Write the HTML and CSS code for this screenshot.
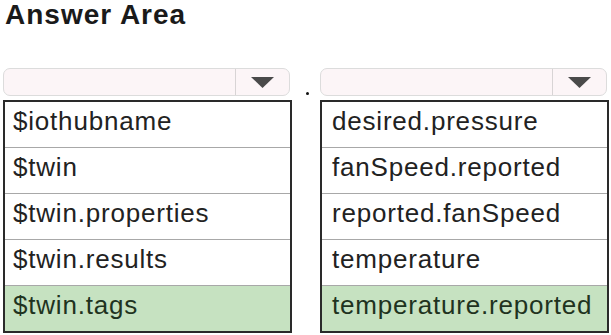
FILE: index.html
```html
<!DOCTYPE html>
<html>
<head>
<meta charset="utf-8">
<link rel="stylesheet" href="styles.css">
</head>
<body>
<div class="page">
  <h1 class="title">Answer Area</h1>
  <div class="row">
    <div class="col">
      <div class="dropdown">
        <div class="dd-field"></div>
        <div class="dd-btn">
          <svg width="23" height="11" viewBox="0 0 23 11"><polygon points="0,0 23,0 11.5,11" fill="#4a4a4a"/></svg>
        </div>
      </div>
      <ul class="list list-left">
        <li>$iothubname</li>
        <li>$twin</li>
        <li>$twin.properties</li>
        <li>$twin.results</li>
        <li class="sel">$twin.tags</li>
      </ul>
    </div>
    <div class="sep"><span class="dot"></span></div>
    <div class="col">
      <div class="dropdown">
        <div class="dd-field"></div>
        <div class="dd-btn">
          <svg width="23" height="11" viewBox="0 0 23 11"><polygon points="0,0 23,0 11.5,11" fill="#4a4a4a"/></svg>
        </div>
      </div>
      <ul class="list list-right">
        <li>desired.pressure</li>
        <li>fanSpeed.reported</li>
        <li>reported.fanSpeed</li>
        <li>temperature</li>
        <li class="sel">temperature.reported</li>
      </ul>
    </div>
  </div>
</div>
</body>
</html>
```
FILE: styles.css
```css
html, body {
  margin: 0;
  padding: 0;
  background: #ffffff;
}
body {
  font-family: "Liberation Sans", Arial, sans-serif;
  color: #222;
}
.page {
  width: 611px;
  height: 335px;
  overflow: hidden;
}
.title {
  margin: 0 0 38px 5px;
  font-size: 28px;
  line-height: 30px;
  font-weight: bold;
  letter-spacing: 1px;
  color: #1a1a1a;
}
.row {
  display: flex;
  padding-left: 3px;
}
.col {
  width: 289px;
  display: flex;
  flex-direction: column;
}
.sep {
  width: 28px;
  position: relative;
}
.dot {
  position: absolute;
  left: 14px;
  top: 24px;
  width: 3px;
  height: 3px;
  background: #111;
  border-radius: 50%;
}
.dropdown {
  width: calc(100% - 2px);
  height: 28px;
  box-sizing: border-box;
  border: 1px solid #dcdcdc;
  border-radius: 7px;
  background: #fcf5f7;
  display: flex;
  margin-bottom: 4px;
}
.dd-field {
  flex: 1;
}
.dd-btn {
  width: 53px;
  border-left: 1px solid #d8d4d5;
  display: flex;
  align-items: center;
  justify-content: center;
}
.dd-btn svg {
  display: block;
}
.list {
  list-style: none;
  margin: 0;
  padding: 0;
  border: 2px solid #2a2a2a;
  width: 100%;
  box-sizing: border-box;
}
.list li {
  height: 45px;
  box-sizing: border-box;
  line-height: 38px;
  padding-bottom: 7px;
  font-size: 26px;
  letter-spacing: 0.8px;
  color: #222;
  white-space: nowrap;
}
.list li + li {
  border-top: 1px solid #a8a8a8;
  height: 46px;
}
.list-left li {
  padding-left: 8px;
}
.list-right li {
  padding-left: 10px;
}
.list li.sel {
  background: #c6e2c1;
  color: #1f3320;
}
```
